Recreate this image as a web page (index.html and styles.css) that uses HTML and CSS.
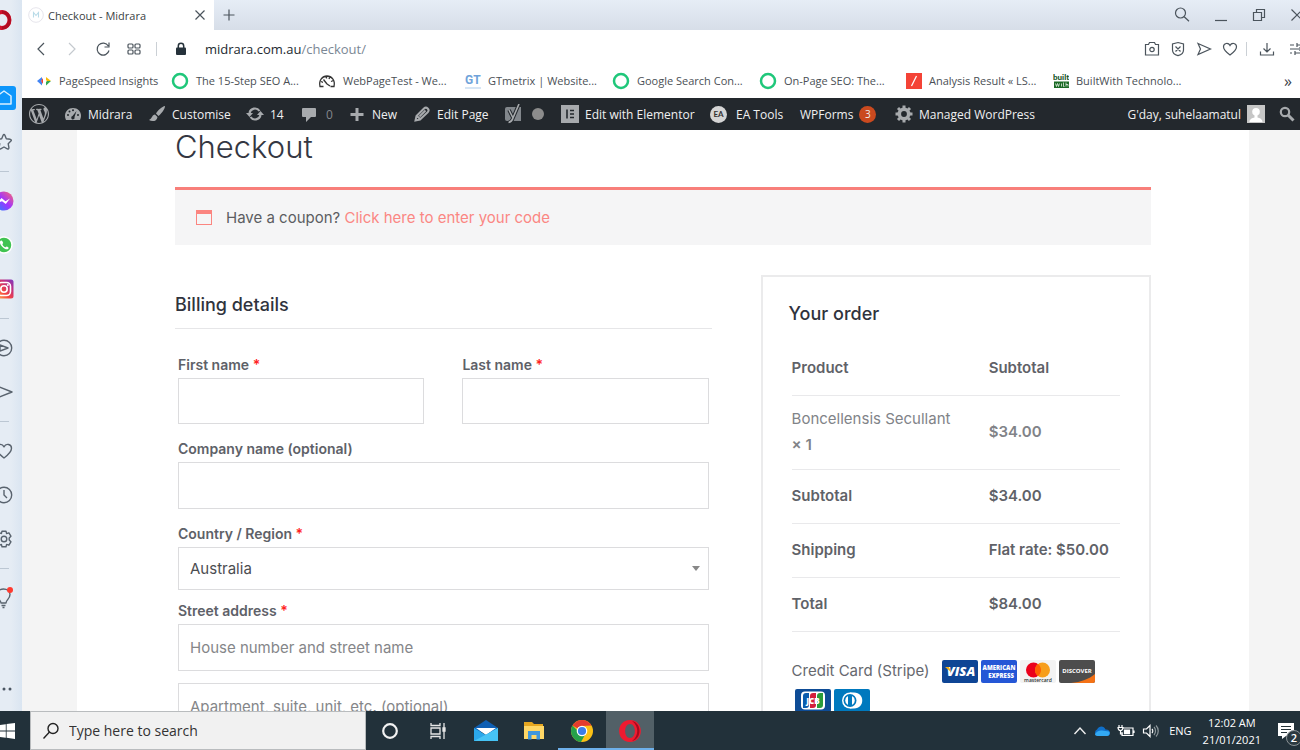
FILE: index.html
```html
<!DOCTYPE html>
<html lang="en-AU">
<head>
<meta charset="utf-8">
<title>Checkout - Midrara</title>
<link rel="stylesheet" href="styles.css">
</head>
<body>
<div class="desktop">
<div class="window">
  <nav class="sidebar" aria-label="Browser sidebar">
    <a class="side-item side-logo" href="#" aria-label="Opera"><svg width="20" height="20" viewBox="0 0 20 20"><ellipse cx="8" cy="10" rx="7.5" ry="8" fill="none" stroke="#d0122b" stroke-width="4"/><path d="M8 2c10 0 10 16 0 16" fill="none" stroke="#b00c22" stroke-width="3"/></svg></a>
    <a class="side-item" href="#" aria-label="Home"><span class="home-tile"><svg width="22" height="22" viewBox="0 0 22 22" fill="none" stroke="#d9efff" stroke-width="1.5" stroke-linejoin="round"><path d="M4 17V9l7-5 7 5v8z"/></svg></span></a>
    <a class="side-item" href="#" aria-label="Bookmarks"><svg class="line" width="18" height="18" viewBox="0 0 18 18"><path d="M9 1.500Q9.600 1.500 10 2.500l1.300 3.200 4 .6q1.700.5.600 1.800l-2.700 2.600.7 4q0 1.800-1.600 1.100L9 14l-3.300 1.800q-1.600.7-1.600-1.100l.7-4L2.100 8.100Q1 6.800 2.700 6.300l4-.6L8 2.500Q8.400 1.500 9 1.500z"/></svg></a>
    <span class="side-rule"></span>
    <a class="side-item" href="#" aria-label="Messenger"><svg width="20" height="20" viewBox="0 0 20 20"><defs><linearGradient id="ms" x1="0" y1="1" x2="1" y2="0"><stop offset="0" stop-color="#1a8cff"/><stop offset=".5" stop-color="#a033ff"/><stop offset="1" stop-color="#ff6b6b"/></linearGradient></defs><circle cx="10" cy="10" r="9.500" fill="url(#ms)"/><path d="M3 12.500L7.500 7l4 3.200L16 7.500 11.800 13 8 10.200z" fill="#fff"/></svg></a>
    <a class="side-item" href="#" aria-label="WhatsApp"><svg width="18" height="18" viewBox="0 0 18 18"><circle cx="9" cy="9" r="8" fill="#40c351" stroke="#fff" stroke-width="1.500"/><path d="M6 4.500c-2 1-1 4 1.500 6.500s5 3 6 1.500c.5-1-.5-1.500-1.800-2-.9 0-.9 1-1.500.8C9 10.800 7.500 9 7.400 8.200c.3-.6 1-.7.7-1.500-.4-1-1-2.500-2.100-2.200z" fill="#fff"/></svg></a>
    <a class="side-item" href="#" aria-label="Instagram"><svg width="20" height="20" viewBox="0 0 20 20"><defs><linearGradient id="ig" x1="0" y1="1" x2="1" y2="0"><stop offset="0" stop-color="#ffc14d"/><stop offset=".4" stop-color="#f5453f"/><stop offset=".7" stop-color="#c3317f"/><stop offset="1" stop-color="#7b3ac4"/></linearGradient></defs><rect width="19" height="19" x=".5" y=".5" rx="2.500" fill="url(#ig)"/><g fill="none" stroke="#fff" stroke-width="1.600"><rect x="3.500" y="3.500" width="13" height="13" rx="4"/><circle cx="10" cy="10" r="3.200"/></g><circle cx="13.900" cy="6.100" r="1" fill="#fff"/></svg></a>
    <span class="side-rule"></span>
    <a class="side-item" href="#" aria-label="Player"><svg class="line" width="18" height="18" viewBox="0 0 18 18"><circle cx="9" cy="9" r="7.700"/><path d="M5 6l8 3-8 3z"/></svg></a>
    <a class="side-item" href="#" aria-label="My Flow"><svg class="line" width="18" height="18" viewBox="0 0 18 18"><path d="M2 3l15 6-15 6 2-6z"/></svg></a>
    <span class="side-rule"></span>
    <a class="side-item" href="#" aria-label="Favourites"><svg class="line" width="18" height="18" viewBox="0 0 18 18"><path d="M9 16C5 13 1.500 9.500 1.500 6.300 1.500 2 7 1 9 4.800 11 1 16.500 2 16.500 6.300 16.500 9.500 13 13 9 16z"/></svg></a>
    <a class="side-item" href="#" aria-label="History"><svg class="line" width="18" height="18" viewBox="0 0 18 18"><circle cx="9" cy="9" r="7.700"/><path d="M9 4v5l3 3"/></svg></a>
    <a class="side-item" href="#" aria-label="Settings"><svg class="line" width="18" height="18" viewBox="0 0 18 18"><path d="M7 1.200h4l.6 2.400 2.300-.8 2 3.400L14.200 8v2l1.700 1.800-2 3.400-2.300-.8-.6 2.400H7l-.6-2.400-2.300.8-2-3.400L3.800 10V8L2.100 6.200l2-3.400 2.300.8z"/><circle cx="9" cy="9" r="2.800"/></svg></a>
    <span class="side-rule"></span>
    <a class="side-item" href="#" aria-label="Tips"><svg class="line" width="26" height="24" viewBox="0 0 26 24"><path d="M10 17c0-3-4-4-4-8.500C6 5 9 3 12.500 3S19 5 19 8.500c0 4.500-4 5.500-4 8.500zM10.500 19.500h4M11.500 21.500h2"/><circle cx="19" cy="4" r="3" fill="#ff3b30" stroke="none"/></svg></a>
    <span class="side-fill"></span>
    <a class="side-item" href="#" aria-label="More"><svg width="18" height="4" viewBox="0 0 18 4" fill="#4b5663"><circle cx="3.500" cy="2" r="1.500"/><circle cx="9" cy="2" r="1.500"/><circle cx="15" cy="2" r="1.500"/></svg></a>
  </nav>

  <div class="browser">
    <header class="titlebar">
      <div class="tab">
        <svg width="16" height="16" viewBox="0 0 16 16"><circle cx="8" cy="8" r="7.300" fill="#fff" stroke="#e6e5ec"/><path d="M5.500 10.500v-5L8 8.500l2.500-3v5" fill="none" stroke="#b9dbe8" stroke-width="1.100"/></svg>
        <span class="tab-title">Checkout - Midrara</span>
        <button class="icon-btn" aria-label="Close tab"><svg class="ui" width="12" height="12" viewBox="0 0 12 12"><path d="M1.500 1.500l9 9m0-9l-9 9"/></svg></button>
      </div>
      <button class="icon-btn new-tab" aria-label="New tab"><svg class="ui" width="12" height="12" viewBox="0 0 12 12"><path d="M6 .5v11M.5 6h11"/></svg></button>
      <div class="window-controls">
        <button class="icon-btn" aria-label="Search tabs"><svg class="ui" width="16" height="16" viewBox="0 0 16 16"><circle cx="6.500" cy="6" r="5"/><path d="M10.200 9.700l4.800 4.500"/></svg></button>
        <button class="icon-btn" aria-label="Minimise"><svg class="ui" width="14" height="14" viewBox="0 0 14 14"><path d="M1 12.500h12"/></svg></button>
        <button class="icon-btn" aria-label="Restore"><svg class="ui" width="14" height="14" viewBox="0 0 14 14"><path d="M1.500 4.500h8v8h-8zM4.500 4.500v-3h8v8h-3"/></svg></button>
        <button class="icon-btn" aria-label="Close"><svg class="ui" width="14" height="14" viewBox="0 0 14 14"><path d="M1.500 1.500l11 11m0-11l-11 11"/></svg></button>
      </div>
    </header>

    <div class="addressbar">
      <div class="nav-buttons">
        <button class="icon-btn" aria-label="Back"><svg class="ui" width="16" height="16" viewBox="0 0 16 16"><path d="M11 2L5 8l6 6"/></svg></button>
        <button class="icon-btn" aria-label="Forward" disabled><svg class="ui faint" width="16" height="16" viewBox="0 0 16 16"><path d="M5 2l6 6-6 6"/></svg></button>
        <button class="icon-btn" aria-label="Reload"><svg class="ui" width="16" height="16" viewBox="0 0 16 16"><path d="M13.300 5A6 6 0 1 0 14 9.500M14 1.500V6H9.500"/></svg></button>
        <button class="icon-btn" aria-label="Speed dial"><svg class="ui" width="16" height="16" viewBox="0 0 16 16"><rect x="2" y="3" width="5" height="4" rx="1"/><rect x="9" y="3" width="5" height="4" rx="1"/><rect x="2" y="9" width="5" height="4" rx="1"/><rect x="9" y="9" width="5" height="4" rx="1"/></svg></button>
      </div>
      <span class="sep"></span>
      <svg width="12" height="14" viewBox="0 0 12 14"><rect x="1" y="5.500" width="10" height="7.500" rx="1" fill="#26323b"/><path d="M3.300 6V4a2.700 2.700 0 0 1 5.400 0v2" fill="none" stroke="#26323b" stroke-width="1.500"/></svg>
      <a class="url" href="#">midrara.com.au<span class="path">/checkout/</span></a>
      <div class="address-actions">
        <button class="icon-btn" aria-label="Snapshot"><svg class="ui" width="16" height="16" viewBox="0 0 16 16"><path d="M1.500 3.500h3l1-2h5l1 2h3v10.500h-13z"/><circle cx="8" cy="8.500" r="2.200"/></svg></button>
        <button class="icon-btn" aria-label="Ad blocker"><svg class="ui" width="16" height="16" viewBox="0 0 16 16"><path d="M8 1.500l5.500 1.500v6c0 3-3 5-5.500 5.700C5.500 14 2.500 12 2.500 9V3zM5.500 5.500l5 5m0-5l-5 5"/></svg></button>
        <button class="icon-btn" aria-label="Send"><svg class="ui" width="16" height="16" viewBox="0 0 16 16"><path d="M2 2.500L14.500 8 2 13.500 4.500 8z"/></svg></button>
        <button class="icon-btn" aria-label="Favourite"><svg class="ui" width="16" height="16" viewBox="0 0 16 16"><path d="M8 14C4.500 11.500 1.500 8.800 1.500 5.800 1.500 2 6.300 1.200 8 4.500 9.700 1.200 14.500 2 14.500 5.800 14.500 8.800 11.500 11.500 8 14z"/></svg></button>
        <span class="sep"></span>
        <button class="icon-btn" aria-label="Downloads"><svg class="ui" width="16" height="16" viewBox="0 0 16 16"><path d="M8 2v8.500M4.500 7.500L8 11l3.500-3.500M1.500 10.500v3.500h13v-3.500"/></svg></button>
        <button class="icon-btn" aria-label="Easy setup"><svg class="ui" width="16" height="16" viewBox="0 0 16 16"><path d="M2 4h4m3 0h6M2 8h9m3 0h1M2 12h2m3 0h8M9 2v4M12 6v4M7 10v4"/></svg></button>
      </div>
    </div>

    <nav class="bookmarks" aria-label="Bookmarks bar">
      <a class="bm bm-first" href="#"><svg width="16" height="16" viewBox="0 0 16 16"><path d="M6 4v3L5 8H1z" fill="#4285f4"/><path d="M1 8h4l1 1v3.500z" fill="#4285f4"/><path d="M5 8l2-3v6z" fill="#ea4335"/><path d="M10 4l5 4h-4l-1-1z" fill="#fbbc05"/><path d="M10 12.500L15 8h-4l-1 1z" fill="#34a853"/></svg><span>PageSpeed Insights</span></a>
      <a class="bm" href="#"><svg width="18" height="18" viewBox="0 0 18 18"><circle cx="9" cy="9" r="7" fill="none" stroke="#1fc77a" stroke-width="2.500"/></svg><span>The 15-Step SEO A...</span></a>
      <a class="bm" href="#"><svg width="18" height="18" viewBox="0 0 18 18" fill="none" stroke="#333" stroke-width="1.300"><path d="M5.500 14.500H2C.5 8 4.500 4 9 4s8.500 4 7 10.500h-3.500M9 12L5.500 7.500M3 9.500l2 .8M8.500 4v2.500M12 4.500L11 7M15.500 8.500l-2.500 1M9 12l3 2"/></svg><span>WebPageTest - We...</span></a>
      <a class="bm" href="#"><span class="gt">GT</span><span>GTmetrix | Website...</span></a>
      <a class="bm" href="#"><svg width="18" height="18" viewBox="0 0 18 18"><circle cx="9" cy="9" r="7" fill="none" stroke="#1fc77a" stroke-width="2.500"/></svg><span>Google Search Con...</span></a>
      <a class="bm" href="#"><svg width="18" height="18" viewBox="0 0 18 18"><circle cx="9" cy="9" r="7" fill="none" stroke="#1fc77a" stroke-width="2.500"/></svg><span>On-Page SEO: The...</span></a>
      <a class="bm" href="#"><svg width="16" height="16" viewBox="0 0 16 16"><path fill="#f44336" d="M0 0h16v16H0z"/><path d="M10.500 3l-5 10" stroke="#fff" stroke-width="1.200"/></svg><span>Analysis Result « LS...</span></a>
      <a class="bm" href="#"><svg class="bw" width="16" height="16" viewBox="0 0 16 16"><text x="0" y="7">built</text><path d="M1 8.500h15V15H1z" fill="#1b6a25"/><path d="M2.500 10.500l1 3 1-3 1 3 1-3M8.500 10.500v3M10.500 9.500v4h1M13 9.500v4M15 13.500v-2h-2" fill="none" stroke="#e6f1e7" stroke-width=".8"/></svg><span>BuiltWith Technolo...</span></a>
      <button class="icon-btn more" aria-label="More bookmarks">»</button>
    </nav>

    <nav class="adminbar" aria-label="WordPress toolbar">
      <a href="#" aria-label="About WordPress"><svg width="20" height="20" viewBox="0 0 20 20"><path fill="#a7aaad" d="M20 10c0-5.510-4.490-10-10-10C4.480 0 0 4.490 0 10c0 5.520 4.480 10 10 10 5.510 0 10-4.480 10-10zM7.780 15.370L4.370 6.220c.55-.02 1.170-.08 1.170-.08.5-.06.44-1.130-.06-1.110 0 0-1.450.11-2.370.11-.18 0-.37 0-.58-.01C4.120 2.690 6.870 1.110 10 1.110c2.330 0 4.450.87 6.050 2.340-.68-.11-1.650.39-1.650 1.580 0 .74.450 1.360.9 2.100.350.610.550 1.360.550 2.460 0 1.490-1.400 5-1.400 5l-3.030-8.370c.540-.020.820-.170.820-.170.5-.050.440-1.250-.060-1.220 0 0-1.440.120-2.380.120-.870 0-2.330-.120-2.330-.120-.5-.030-.560 1.200-.060 1.220l.920.080 1.260 3.410zM17.410 10c.240-.640.740-1.870.430-4.250.7 1.290 1.050 2.710 1.050 4.250 0 3.290-1.730 6.240-4.400 7.780.970-2.590 1.940-5.200 2.920-7.780zM6.100 18.090C3.120 16.650 1.110 13.530 1.110 10c0-1.300.230-2.480.72-3.590C3.250 10.300 4.670 14.200 6.100 18.090zm4.030-6.630l2.580 6.980c-.860.290-1.760.450-2.710.450-.790 0-1.570-.110-2.290-.330.810-2.380 1.620-4.740 2.420-7.100z"/></svg></a>
      <a href="#"><svg width="18" height="18" viewBox="0 0 18 18"><path fill="#a7aaad" d="M2 15C-1 9 3 3 9 3s10 6 7 12z"/><g fill="#23282d"><circle cx="4" cy="10" r="1"/><circle cx="5.500" cy="6.500" r="1"/><circle cx="9" cy="5.200" r="1"/><circle cx="14" cy="10" r="1"/><path d="M12.500 6L10.500 12a1.700 1.700 0 1 1-2-1z"/></g></svg>Midrara</a>
      <a href="#"><svg width="18" height="18" viewBox="0 0 18 18" fill="#a7aaad"><path d="M17 1c-3 .5-7 4-9 7.500L10.500 11C13.500 8.500 17 4 17 1zM7 9.500c-3 0-2.500 4-6 5.500 3 2 8 1.500 8.500-3z"/></svg>Customise</a>
      <a href="#"><svg width="18" height="18" viewBox="0 0 18 18"><path d="M3.500 8a5.500 5.500 0 0 1 10-2M14.500 10a5.500 5.500 0 0 1-10 2" fill="none" stroke="#a7aaad" stroke-width="2.200"/><path fill="#a7aaad" d="M0 8h7l-3.500 4zM11 10h7l-3.500-4z"/></svg>14</a>
      <a class="muted" href="#"><svg width="18" height="18" viewBox="0 0 18 18"><path fill="#a7aaad" d="M3 3h12a1 1 0 0 1 1 1v7a1 1 0 0 1-1 1h-4l-5 5v-5H3a1 1 0 0 1-1-1V4a1 1 0 0 1 1-1z"/></svg>0</a>
      <a href="#"><svg width="18" height="18" viewBox="0 0 18 18"><path d="M9 3v13M2.500 9.500h13" stroke="#a7aaad" stroke-width="3"/></svg>New</a>
      <a href="#"><svg width="18" height="18" viewBox="0 0 18 18"><path d="M3.500 11L11 3.500a2.500 2.500 0 0 1 3.700 3.700L7 14.500l-4.500 1zM6.500 11.500l6-6M4 11l3 3" fill="none" stroke="#a7aaad" stroke-width="2"/></svg>Edit Page</a>
      <a class="yoast" href="#" aria-label="Yoast SEO"><svg width="20" height="20" viewBox="0 0 20 20"><path d="M4 3h14v14H4a2 2 0 0 1-2-2V5a2 2 0 0 1 2-2z" fill="#82878c"/><path d="M6 6l4 8M16 0L10 14c-.8 2.500-2 4-4.500 4.500" fill="none" stroke="#23282d" stroke-width="3.600"/><path d="M6 6l4 8M16 0L10 14c-.8 2.500-2 4-4.500 4.500" fill="none" stroke="#a7aaad" stroke-width="1.600"/></svg><span class="score"></span></a>
      <a href="#"><svg width="18" height="18" viewBox="0 0 18 18"><path fill="#a7aaad" d="M0 0h18v18H0z"/><path d="M6 4.500v9M9 5.500h4M9 9h4M9 12.500h4" stroke="#23282d" stroke-width="1.600"/></svg>Edit with Elementor</a>
      <a class="ea-tools" href="#"><span class="ea">EA</span>EA Tools</a>
      <a href="#">WPForms<span class="count">3</span></a>
      <a href="#"><svg width="18" height="18" viewBox="0 0 18 18"><circle cx="9" cy="9" r="4.700" fill="none" stroke="#a7aaad" stroke-width="3.600"/><path d="M9 .5v3M9 14.500v3M.5 9h3M14.500 9h3M3 3l2 2M13 13l2 2M15 3l-2 2M5 13l-2 2" stroke="#a7aaad" stroke-width="3"/></svg>Managed WordPress</a>
      <a class="account" href="#">G'day, suhelaamatul<svg width="18" height="18" viewBox="0 0 18 18"><path fill="#c6c6c6" d="M0 0h18v18H0z"/><circle cx="9" cy="6.800" r="3.800" fill="#fff"/><path d="M2.500 17c0-3 3-4 5-4.500V9h3v3.500c2 .5 5 1.500 5 4.500z" fill="#fff"/></svg></a>
      <a class="search" href="#" aria-label="Search"><svg width="16" height="16" viewBox="0 0 16 16" fill="none" stroke="#a7aaad"><circle cx="6" cy="6" r="4.200" stroke-width="2.200"/><path d="M9 9l5.500 5.500" stroke-width="3"/></svg></a>
    </nav>

    <main class="page">
      <div class="site">
        <h1>Checkout</h1>
        <div class="notice"><span class="notice-icon"></span><p>Have a coupon? <a href="#">Click here to enter your code</a></p></div>
        <form class="checkout">
          <section class="billing">
            <h2>Billing details</h2>
            <div class="fields">
              <div class="pair">
                <div class="field"><label for="first">First name <abbr>*</abbr></label><input id="first" type="text"></div>
                <div class="field"><label for="last">Last name <abbr>*</abbr></label><input id="last" type="text"></div>
              </div>
              <div class="field"><label for="company">Company name (optional)</label><input id="company" type="text"></div>
              <div class="field country"><label for="country">Country / Region <abbr>*</abbr></label><select id="country"><option>Australia</option></select></div>
              <div class="field"><label for="street">Street address <abbr>*</abbr></label><input id="street" type="text" placeholder="House number and street name"></div>
              <div class="field"><input type="text" aria-label="Apartment" placeholder="Apartment, suite, unit, etc. (optional)"></div>
            </div>
          </section>
          <section class="order">
            <h2>Your order</h2>
            <div class="order-body">
            <table>
              <thead><tr><th>Product</th><th>Subtotal</th></tr></thead>
              <tbody><tr class="item"><td>Boncellensis Secullant <strong>×&nbsp;1</strong></td><td><strong>$34.00</strong></td></tr></tbody>
              <tfoot>
                <tr><th>Subtotal</th><td>$34.00</td></tr>
                <tr><th>Shipping</th><td>Flat rate: $50.00</td></tr>
                <tr><th>Total</th><td>$84.00</td></tr>
              </tfoot>
            </table>
            <p class="payment"><span class="method">Credit Card (Stripe)</span>
              <svg class="card" viewBox="0 0 36 23"><rect width="36" height="23" rx="2" fill="#0e4595"/><text x="19" y="16" class="visa">VISA</text><path d="M3 7h4l2 5z" fill="#f2ae14"/></svg><svg class="card" viewBox="0 0 36 23"><rect width="36" height="23" rx="2" fill="#2557d6"/><text x="18" y="10" class="amex">AMERICAN</text><text x="20" y="18" class="amex">EXPRESS</text></svg><svg class="card" viewBox="0 0 36 23"><rect width="36" height="23" rx="2" fill="#f3f3f3"/><circle cx="13.500" cy="10" r="7.500" fill="#eb001b"/><circle cx="22.500" cy="10" r="7.500" fill="#f79e1b"/><path d="M18 4a7.500 7.500 0 0 1 0 12 7.500 7.500 0 0 1 0-12z" fill="#ff5f00"/><text x="18" y="21.500" class="mc">mastercard</text></svg><svg class="card" viewBox="0 0 36 23"><rect width="36" height="23" rx="2" fill="#4d4d4d"/><path d="M36 14v7a2 2 0 0 1-2 2H12c10-1 18-4 24-9z" fill="#f47216"/><text x="18" y="12.500" class="disc">DISCOVER</text></svg><svg class="card" viewBox="0 0 36 23"><rect width="36" height="23" rx="2" fill="#0e4c96"/><rect x="6" y="2.500" width="24" height="18" rx="4" fill="#fff"/><path d="M8 7a3 3 0 0 1 3-3h3v12a3 3 0 0 1-3 3H8z" fill="#0b5cae"/><path d="M15 7a3 3 0 0 1 3-3h3v12a3 3 0 0 1-3 3h-3z" fill="#d21f3c"/><path d="M22 7a3 3 0 0 1 3-3h3v12a3 3 0 0 1-3 3h-3z" fill="#2a9b3a"/><text x="18" y="14.500" class="jcb">JCB</text></svg><svg class="card" viewBox="0 0 36 23"><rect width="36" height="23" rx="2" fill="#0079be"/><path d="M16 3.500h4c11 0 11 16 0 16h-4z" fill="#fff"/><circle cx="16" cy="11.500" r="8" fill="#fff"/><circle cx="16" cy="11.500" r="6.500" fill="#0079be"/><path d="M14 7a5 5 0 0 0 0 9zM18 7a5 5 0 0 1 0 9z" fill="#fff"/></svg>
            </p>
            </div>
          </section>
        </form>
      </div>
    </main>
  </div>
</div>

<footer class="taskbar">
  <button class="start" aria-label="Start"><svg width="16" height="16" viewBox="0 0 16 16" fill="#fff"><path d="M0 2.200L6.800 1.300v6.200H0zM7.600 1.100L16 0v7.500H7.600zM0 8.400h6.800v6.300L0 13.800zM7.600 8.400H16V16l-8.400-1.200z"/></svg></button>
  <label class="task-search"><svg width="18" height="18" viewBox="0 0 18 18" fill="none" stroke="#222" stroke-width="1.400"><circle cx="11" cy="6.500" r="5"/><path d="M7.500 10L1.500 16.500"/></svg><input type="text" placeholder="Type here to search" aria-label="Type here to search"></label>
  <div class="apps">
    <button aria-label="Cortana"><svg width="20" height="20" viewBox="0 0 20 20"><circle cx="10" cy="10" r="6.800" fill="none" stroke="#f2f2f2" stroke-width="2.200"/></svg></button>
    <button aria-label="Task view"><svg width="20" height="20" viewBox="0 0 20 20" fill="none" stroke="#e6e6e6" stroke-width="1.300"><path d="M3 2v2.500h9V2M3 7h9v6H3zM3 18v-2.500h9V18M16 2v16M15 7h2v3h-2z"/></svg></button>
    <button aria-label="Mail"><svg width="24" height="24" viewBox="0 0 24 24"><path d="M0 9l12-8 12 8v4H0z" fill="#0f5fb3"/><path d="M2 9h20L12 16z" fill="#fff"/><path d="M0 9l12 7 12-7v13H0z" fill="#2ba7ea"/><path d="M0 22L24 9v13z" fill="#46c3f5"/></svg></button>
    <button aria-label="File Explorer"><svg width="24" height="24" viewBox="0 0 24 24"><path d="M2 3h8l2 2h9v4H2z" fill="#e5a620"/><path d="M2 7h20v13H2z" fill="#ffd766"/><path d="M6 12h12v8.500h-3.500V16h-5v4.500H6z" fill="#3f97dd"/></svg></button>
    <button class="running" aria-label="Chrome"><svg width="24" height="24" viewBox="0 0 24 24"><circle cx="12" cy="12" r="11" fill="#fbc116"/><path d="M12 12L2.500 6.500A11 11 0 0 1 21.500 6.500L12 7z" fill="#e33b2e"/><path d="M2.500 6.500A11 11 0 0 0 11 23l5-9-4 2z" fill="#25a04a"/><circle cx="12" cy="12" r="5.300" fill="#fff"/><circle cx="12" cy="12" r="4.100" fill="#3b7de9"/></svg></button>
    <button class="running active" aria-label="Opera"><svg width="24" height="24" viewBox="0 0 24 24"><path fill-rule="evenodd" fill="#ef1b30" d="M12 1c14.500 0 14.500 22 0 22S-2.500 1 12 1zm0 4c-6.500 0-6.500 14 0 14s6.500-14 0-14z"/><path d="M14 2c10 2 10 18 0 20 7-5 7-15 0-20z" fill="#a50b1f"/></svg></button>
  </div>
  <div class="tray">
    <button aria-label="Show hidden icons"><svg width="14" height="14" viewBox="0 0 14 14" fill="none" stroke="#eee" stroke-width="1.400"><path d="M1.500 10L7 4l5.500 6"/></svg></button>
    <button aria-label="OneDrive"><svg width="16" height="14" viewBox="0 0 16 14"><path d="M3.500 12a3.500 3.500 0 0 1-.5-6.500C5 1.500 10 1.500 11.500 5.500 17 5 17.500 12 13 12z" fill="#0f6fc9"/><path d="M1 10C3 7 6 6 8 6.500l7 1c1.500 2 0 4.500-2 4.500H3.500C2 12 1 11 1 10z" fill="#33a9f3"/></svg></button>
    <button aria-label="Battery"><svg width="18" height="14" viewBox="0 0 18 14" fill="none" stroke="#fff" stroke-width="1.200"><path d="M6 4h10v7.500H5V8M17 6.500v2.500M2 1v2.500M5 1v2.500M1 3.500h5c0 4-5 4-5 0zM3.500 6.500V10H6"/><path d="M7.500 6h5v3.700h-5z" fill="#fff"/></svg></button>
    <button aria-label="Volume"><svg width="18" height="14" viewBox="0 0 18 14" fill="none" stroke="#fff" stroke-width="1.200"><path d="M1.500 5h3L8 1.500v11L4.500 9h-3zM10 5c1 1 1 3 0 4"/><path d="M12 3c2 2 2 6 0 8M14 1.500c3 3 3 8 0 11" stroke="#8d979b"/></svg></button>
    <span class="lang">ENG</span>
    <time class="clock">12:02 AM<br>21/01/2021</time>
    <button class="notify" aria-label="Notifications"><svg width="16" height="16" viewBox="0 0 16 16"><path d="M0 0h16v13H8l-4 3v-3H0z" fill="#fff"/><path d="M3 3.500h10M3 6.500h10M3 9.500h6" stroke="#243238" stroke-width="1.200"/></svg><span class="notify-count">2</span></button>
  </div>
</footer>
</div>
</body>
</html>
```
FILE: styles.css
```css
* { box-sizing: border-box; }
body { margin: 0; font-family: "Open Sans", "Noto Sans", sans-serif; font-size: 12px; color: #3c4147; }
h1, h2, p { margin: 0; font-weight: 400; }
a { color: inherit; text-decoration: none; }
svg { display: block; flex: none; }
button { border: 0; padding: 0; background: none; color: inherit; font: inherit; display: flex; align-items: center; justify-content: center; }

.desktop { height: 100vh; display: flex; flex-direction: column; overflow: hidden; }
.window { flex: 1; min-height: 0; display: flex; background: #e1e9f2; }

/* Sidebar hangs partly off the left edge of the screen */
.sidebar { flex: none; width: 37px; margin-left: -15px; display: flex; flex-direction: column; background: linear-gradient(90deg, #e5ecf4 70%, #dae5f1); }
.side-item { height: 44px; flex: none; display: flex; align-items: center; justify-content: center; }
.side-logo { height: 39px; margin-bottom: 37px; }
.side-rule { flex: none; height: 1px; margin: 7px 13px 7px 0; background: #bcc7d3; }
.side-fill { flex: 1; max-height: 51px; }
.home-tile { display: flex; padding: 1px; border-radius: 3px; background: #0d96fb; }
.line { fill: none; stroke: #59636e; stroke-width: 1.4; stroke-linejoin: round; }

.browser { flex: 1; min-width: 0; display: flex; flex-direction: column; background: #fff; }
.titlebar { height: 30px; flex: none; display: flex; align-items: center; background: linear-gradient(#e6edf6, #d7dee8); }
.tab { width: 192px; height: 30px; flex: none; display: flex; align-items: center; gap: 4px; padding: 0 8px 0 6px; background: #fff; }
.tab-title { flex: 1; font-size: 11px; color: #3b3f44; }
.icon-btn { flex: none; }
.new-tab { margin-left: 9px; }
.window-controls { margin-left: auto; margin-right: -4px; display: flex; align-items: center; gap: 24px; }
.ui { fill: none; stroke: #4b545c; stroke-width: 1.2; }
.faint { stroke: #c4c9ce; }

.addressbar { height: 37px; flex: none; display: flex; align-items: center; padding-left: 11px; }
.nav-buttons { display: flex; gap: 15px; }
.sep { width: 1px; height: 14px; background: #cbd0d5; flex: none; }
.nav-buttons + .sep { margin: 0 18px 0 14px; }
.url { margin-left: 18px; font-size: 13px; color: #22292f; }
.path { color: #7b8794; }
.address-actions { margin-left: auto; margin-right: -4px; display: flex; align-items: center; gap: 10px; }
.address-actions .sep { margin: 0 2px 0 -2px; }
.address-actions .sep + .icon-btn { margin-right: 3px; }

.bookmarks { height: 31px; flex: none; display: flex; align-items: center; padding: 0 8px 4px 14px; }
.bm { flex: 0 1 147px; min-width: 0; display: flex; align-items: center; gap: 7px; white-space: nowrap; font-size: 11px; color: #4a4f55; }
.bm-first { flex-basis: 135px; }
.gt { width: 16px; border-bottom: 2px solid #d7e6f5; font: 700 12px/14px "Roboto", sans-serif; color: #6fa3da; }
.bw text { font: 900 8px "Lato", sans-serif; fill: #14521c; }
.more { margin-left: auto; font-size: 16px; }

.adminbar { height: 32px; flex: none; display: grid; grid-template-columns: 35px 84px 98px 54px 48px 65px 90px 58px 149px 90px 95px 150px 1fr 18px; align-items: center; padding: 0 5px 0 7px; background: #23282d; color: #f0f0f1; white-space: nowrap; }
.adminbar a { display: flex; align-items: center; gap: 6px; }
.adminbar .muted { color: #82878c; gap: 8px; }
.adminbar .yoast { gap: 9px; }
.adminbar .ea-tools { gap: 9px; }
.adminbar .account { justify-content: flex-end; padding-right: 12px; }
.adminbar .search { justify-content: flex-end; }
.score { width: 12px; height: 12px; border-radius: 50%; background: #8c8c8c; }
.ea { width: 17px; height: 17px; border-radius: 50%; background: #d5d5d5; color: #333; font: 700 8px/17px "Lato", sans-serif; text-align: center; }
.count { width: 17px; height: 17px; border-radius: 50%; background: #ca4a1f; font-size: 10px; line-height: 17px; text-align: center; }

.page { flex: 1; min-height: 0; overflow: hidden; padding-left: 4px; background: #f4f4f4; }
.site { max-width: 1172px; min-height: 100%; margin: 0 auto; padding: 0 98px; background: #fff; font-family: "Inter", sans-serif; font-size: 15px; line-height: 26px; color: #66686e; }
.site h1 { padding-bottom: 24px; font-size: 31px; line-height: 33px; font-weight: 300; color: #343742; }
.notice { display: flex; align-items: center; gap: 14px; height: 58px; padding: 0 21px; border-top: 3px solid #f87f7a; background: #f5f5f6; color: #5c5d61; }
.notice a { color: #fb8783; }
.notice-icon { width: 16px; height: 15px; border: 1px solid #fb8580; border-top-width: 4px; }
.checkout { display: flex; justify-content: space-between; align-items: flex-start; margin-top: 30px; }
.billing { width: 55%; }
.site h2 { font-size: 18px; font-weight: 500; color: #30333d; }
.billing h2 { padding: 17px 0 10px; border-bottom: 1px solid #e6e6e8; }
.fields { display: flex; flex-direction: column; gap: 12px; padding: 23px 3px 0; }
.pair { display: grid; grid-template-columns: 1fr 1fr; gap: 38px; }
.field label { display: block; font-size: 14px; font-weight: 600; color: #5e6168; }
.field abbr { color: #f22; }
.field input, .field select { display: block; width: 100%; height: 47px; padding: 0 11px; border: 1px solid #dcdcde; border-radius: 0; background: #fff; font: inherit; color: #4c4d51; outline: 0; }
.pair input { height: 46px; }
.field input::placeholder { color: #858689; opacity: 1; }
.field select { height: 43px; appearance: none; background: #fff url("data:image/svg+xml,%3Csvg xmlns='http://www.w3.org/2000/svg' width='8' height='5'%3E%3Cpath d='M0 0h8L4 5z' fill='%23888'/%3E%3C/svg%3E") no-repeat right 8px center; }
.country { margin-bottom: -4px; }

.order { width: 40%; padding: 24px 26px 30px; border: 2px solid #ebebec; }
.order-body { padding: 14px 3px 0; }
.order table { width: 100%; border-collapse: collapse; table-layout: fixed; text-align: left; }
.order th, .order td { height: 54px; padding: 0; border-bottom: 1px solid #e9e9eb; font-weight: 600; color: #5f6268; }
.order th:first-child { width: 60%; }
.order .item td { height: 74px; padding-right: 20px; font-weight: 400; color: #818388; }
.item strong { font-weight: 600; }
.payment { padding-top: 24px; line-height: 29px; }
.method { margin-right: 5px; }
.card { display: inline-block; width: 36px; height: 23px; margin-left: 3px; vertical-align: middle; }
.card text { text-anchor: middle; fill: #fff; font-family: "Open Sans", sans-serif; font-weight: 800; }
.card .visa { font-size: 13px; font-style: italic; }
.card .amex { font-size: 6px; }
.card .mc { font-size: 5px; fill: #333; font-weight: 600; }
.card .disc { font-size: 6px; font-weight: 700; }
.card .jcb { font-size: 8px; }

.taskbar { height: 39px; flex: none; display: flex; background: #22313a; color: #fff; }
.start { width: 30px; padding-right: 16px; }
.task-search { flex: 0 1 336px; display: flex; align-items: center; gap: 9px; padding-left: 11px; border: 1px solid #b9bcbe; background: #f1f1f1; }
.task-search input { flex: 1; min-width: 0; border: 0; padding: 0; outline: 0; background: none; font: 14px "Open Sans", sans-serif; }
.task-search input::placeholder { color: #333; opacity: 1; }
.apps { display: flex; }
.apps button { width: 48px; height: 39px; }
.running { box-shadow: inset 0 -2px #6eb0ea; }
.active { background: #526067; }
.tray { margin-left: auto; display: flex; align-items: center; gap: 7px; }
.lang { margin-left: 2px; font-size: 11px; }
.clock { padding: 0 10px 0 4px; font-size: 11px; line-height: 17px; text-align: center; }
.notify { position: relative; padding-right: 6px; }
.notify-count { position: absolute; left: 8px; top: 7px; width: 16px; height: 16px; border: 1px solid #8b9296; border-radius: 50%; background: #2b3940; font-size: 11px; line-height: 14px; font-weight: 600; text-align: center; }
```
